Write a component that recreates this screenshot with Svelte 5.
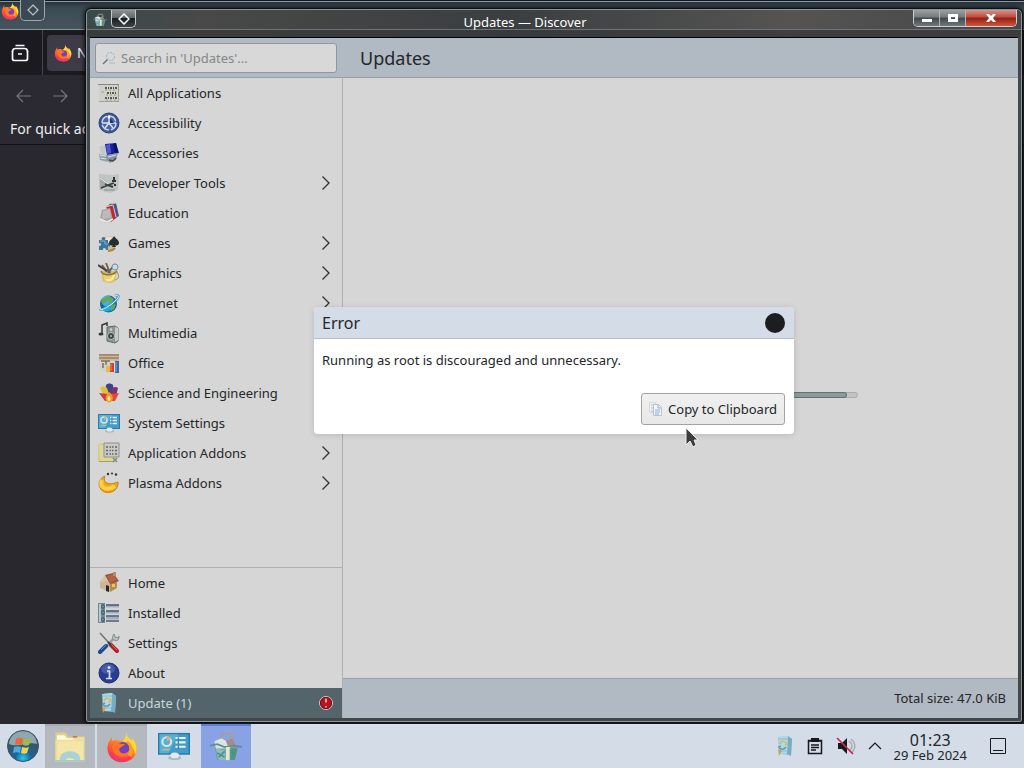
<script>
  const categories = [
    { icon: 'apps', label: 'All Applications' },
    { icon: 'access', label: 'Accessibility' },
    { icon: 'accessories', label: 'Accessories' },
    { icon: 'dev', label: 'Developer Tools', more: true },
    { icon: 'edu', label: 'Education' },
    { icon: 'games', label: 'Games', more: true },
    { icon: 'graphics', label: 'Graphics', more: true },
    { icon: 'internet', label: 'Internet', more: true },
    { icon: 'media', label: 'Multimedia' },
    { icon: 'office', label: 'Office' },
    { icon: 'science', label: 'Science and Engineering' },
    { icon: 'system', label: 'System Settings' },
    { icon: 'addons', label: 'Application Addons', more: true },
    { icon: 'plasma', label: 'Plasma Addons', more: true }
  ];
  const places = [
    { icon: 'home', label: 'Home' },
    { icon: 'installed', label: 'Installed' },
    { icon: 'tools', label: 'Settings' },
    { icon: 'about', label: 'About' },
    { icon: 'update', label: 'Update (1)', active: true }
  ];
  const tasks = [
    { icon: 'folder', label: 'Files', state: 'open' },
    { icon: 'firefox', label: 'Firefox', state: 'open' },
    { icon: 'system', label: 'System Settings', state: '' },
    { icon: 'bag', label: 'Discover', state: 'current' }
  ];
</script>

{#snippet icon(name)}
  <svg class="icon" viewBox="0 0 22 22" aria-hidden="true">
    {#if name === 'apps'}
      <path d="M1 3h20v16H1z" fill="#cfcfcc" /><path d="M0 2.500h21" stroke="#84888a" /><path d="M1 19.500h20" stroke="#a3a39a" /><path d="M20.500 3v16" stroke="#a89f7a" />
      <path d="M7 6h12M9 11h10M7 16h12" stroke="#55595a" stroke-width="2" stroke-dasharray="2 1 1 1" /><path d="M7 8h12M8 13h11M8 18h11" stroke="#a39a78" stroke-dasharray="2 2" /><path d="M3 10h3" stroke="#9fa3a3" />
    {:else if name === 'access'}
      <circle cx="11" cy="11" r="10" fill="#3c5594" stroke="#2b4278" /><circle cx="11" cy="11" r="7" fill="#4a63a2" stroke="#c9d5ea" stroke-width="1.500" stroke-dasharray="9 2" />
      <path d="M11 3v9M4 11h14M11 11l-4 5M11 11l4 5" stroke="#dbe5f2" stroke-width="1.400" fill="none" /><path d="M12 6v5h4z" fill="#20376e" /><circle cx="11" cy="5" r="1.500" fill="#fff" />
    {:else if name === 'accessories'}
      <path d="M1 5l7-2 1 7-5 3z" fill="#c3c7cb" /><path d="M7 2l11-1 3 10-12 2z" fill="#1a1f9c" /><path d="M8 3l4-1 1 9-4 1z" fill="#4a58d2" /><path d="M15 2l3-1 2 9-3 1z" fill="#0b1065" />
      <path d="M1 12l8 1 1 7-8-2z" fill="#95a1aa" /><path d="M9 13l11-2-2 7-6 3-4-4z" fill="#8a949b" /><path d="M2 13l6 1M10 15l8-2M3 16l5 1" stroke="#d8e1e5" /><path d="M11 18l4 1 3-3" stroke="#404b55" stroke-width="1.500" fill="none" />
    {:else if name === 'dev'}
      <path d="M1 2l14 1 6-1-1 16-8 3-11-3z" fill="#c0c3c1" /><path d="M2 5l7 5-7 8z" fill="#a3a8a7" /><path d="M3 16l10-4 3-1" stroke="#353e3e" stroke-width="1.500" fill="none" /><path d="M7 12l8 3" stroke="#394343" stroke-width="2" /><path d="M16 5v3M14 9h4M17 12v2" stroke="#2e3635" stroke-width="2" /><path d="M6 18h11" stroke="#8a918f" /><path d="M2 6l8 6" stroke="#ecefed" />
    {:else if name === 'edu'}
      <path d="M11 2l7-1 3 13-5 3z" fill="#46568d" /><path d="M13 2l5-1" stroke="#b3bad4" /><path d="M8 4l7-1 3 13-5 4z" fill="#bd2932" /><path d="M4 8l8-2 3 12-6 3-7-4z" fill="#a4a2a1" /><path d="M5 9l7-2 1 9-9 1z" fill="#bdbbb9" /><path d="M2 17l7 3 6-3" stroke="#eeeaea" fill="none" stroke-width="1.500" /><path d="M7 5l8-2 3 12" fill="none" stroke="#e4c5c8" />
    {:else if name === 'games'}
      <circle cx="11" cy="11" r="7" fill="#d1b991" /><circle cx="11" cy="9" r="4.500" fill="#f2dfc5" /><path d="M1 8h3c-2-4 5-4 3 0h3v3c3-1 3 5 0 3v4H8c0-3-4-2-3 0H1v-4c3 0 3-3 0-3z" fill="#39779b" /><path d="M2 9h5v3h3" stroke="#85b5cf" fill="none" />
      <path d="M16 4c2 3 5 4 5 7 0 3-4 3-5 1-1 2-5 2-5-1 0-3 4-4 5-7zM16 10l2 5h-4z" fill="#222d31" /><path d="M10 19c3 0 5-1 7-3" stroke="#b87f3d" stroke-width="2" fill="none" />
    {:else if name === 'graphics'}
      <path d="M3 9h16l-2 10c-4 3-9 2-12 0z" fill="#dfbb5b" /><path d="M5 10c2 3 9 3 13 0l-2 8c-2 2-7 3-10 0z" fill="#ecd070" /><path d="M8 18c4 1 7-1 8-5" stroke="#f8ebaa" fill="none" stroke-width="2" />
      <path d="M4 3l5 7M8 1l4 10" stroke="#81673f" stroke-width="2" /><path d="M0 3l9 6" stroke="#38414a" stroke-width="2" /><path d="M10 11l7-9M9 7l3 4" stroke="#5b6278" stroke-width="2" /><circle cx="17" cy="5" r="3" fill="#c4dcec" stroke="#7890ac" /><path d="M3 9c2 5 12 5 16 0" stroke="#877238" fill="none" stroke-width="1.500" /><path d="M18 8c4 6 3 9-1 10" stroke="#9e9051" fill="none" />
    {:else if name === 'internet'}
      <circle cx="10.500" cy="12" r="8.500" fill="#1864a4" /><circle cx="9" cy="9" r="5.500" fill="#55c2e7" opacity=".8" /><path d="M5 7l5-3 5 2 1 4-4 1-2-3-4 4-3-2zM12 13l6-1-2 5-3 2z" fill="#61a957" /><path d="M17 4c6-2 3 3-2 7-5 4-12 8-13 6" fill="none" stroke="#3f95c5" stroke-width="2.500" /><path d="M17 4c6-2 3 3-2 7-5 4-12 8-13 6" fill="none" stroke="#eef8fa" stroke-width="1" /><ellipse cx="9" cy="17" rx="4" ry="2.500" fill="#25dcf4" opacity=".6" />
    {:else if name === 'media'}
      <path d="M4 12V3l5-2v3" fill="none" stroke="#313637" stroke-width="1.500" /><ellipse cx="3" cy="12" rx="2.500" ry="1.500" fill="#303536" /><path d="M9 5l8-1 3 2v13l-3 2-8-2z" fill="#8d9191" stroke="#666c6b" /><path d="M17 5l3 1v12l-3 2z" fill="#c7cbca" /><circle cx="13" cy="14" r="3.500" fill="#353d3f" stroke="#c3caca" /><circle cx="13" cy="14" r="1.300" fill="#94a4a6" /><circle cx="13" cy="7.500" r="1.300" fill="#d2d6d5" />
    {:else if name === 'office'}
      <path d="M1 2h20v7H1z" fill="#cbb99b" /><path d="M1 3h20M1 6h20" stroke="#a07d62" stroke-width="1.500" /><path d="M2 8h11v11H2z" fill="#d5d1c7" /><path d="M3 9h9M5 11v5M8 9v4" stroke="#756f64" stroke-width="1.500" /><path d="M8 14h4v6H8z" fill="#e4ba42" /><path d="M12 11h4v9h-4z" fill="#cc4333" /><path d="M17 9h4v12h-4z" fill="#386d9c" /><path d="M13 12v7" stroke="#ef8473" /><path d="M18 10v10" stroke="#88aed0" />
    {:else if name === 'science'}
      <path d="M8 3c2-2 5-2 7 0l1 8H7z" fill="#394192" /><path d="M2 6c2-2 5-2 7 0l3 9-6-1z" fill="#e3bd36" /><path d="M20 6c-2-2-5-1-7 1l-2 9 7-2z" fill="#7d3171" /><path d="M1 11l9 1 2 7H7z" fill="#cf3c3d" /><path d="M21 11l-8 1-3 7h7z" fill="#d84d38" /><path d="M11 10c3 2 5 5 3 9-2 2-5 2-6-1-1-3 0-5 3-8z" fill="#f19a22" /><ellipse cx="11" cy="16.500" rx="1.500" ry="2.500" fill="#fce9b4" />
    {:else if name === 'system'}
      <path d="M0 2h22v15H0z" fill="#267cac" /><path d="M1 3h20v13H1z" fill="#449bc7" /><path d="M1 3h13L7 16H1z" fill="#68bad8" opacity=".6" /><circle cx="6" cy="8" r="3" fill="none" stroke="#cfe7ee" stroke-width="1.500" /><path d="M6 8V4l3 2z" fill="#e5a76e" /><path d="M12 5.500h7M12 8.500h7M12 11.500h7" stroke="#e4f3f6" stroke-width="1.500" /><path d="M14 5v8" stroke="#348bbd" /><path d="M3 13.500h5" stroke="#c9b494" stroke-width="1.200" /><ellipse cx="11.500" cy="19" rx="4.500" ry="1.700" fill="#adb7c0" /><ellipse cx="11.500" cy="17.500" rx="3" ry="2" fill="#e5e9ed" />
    {:else if name === 'addons'}
      <path d="M0 2l6-1v17l-6 2z" fill="#d3cf82" /><path d="M1 3h18v16H2z" fill="#dad79a" /><path d="M6 1h15v14H6z" fill="#c9cbc6" stroke="#8e9189" /><path d="M8 5h11M8 8.500h11M8 12h11" stroke="#5c6262" stroke-width="1.500" stroke-dasharray="2 1" /><path d="M11 3v11M16 3v11" stroke="#c9cbc6" /><path d="M1 19.500h15" stroke="#a3a064" /><path d="M15 16l4 4M15 20l4-4" stroke="#85897f" stroke-width="1.500" />
    {:else if name === 'plasma'}
      <path d="M7 4C4 11 11 14 20 10c1 6-5 12-12 10C-1 18-1 7 7 4z" fill="#e8a725" stroke="#c98018" /><path d="M4 8c-3 9 6 11 13 6" fill="none" stroke="#ffd03f" stroke-width="4" /><circle cx="10" cy="2" r="1.200" fill="#30332c" /><circle cx="14" cy="1.500" r="1" fill="#30332c" /><circle cx="18" cy="2.500" r="1.200" fill="#30332c" /><path d="M3 17c3 4 8 4 11 2" fill="none" stroke="#e58c1c" stroke-width="1.500" />
    {:else if name === 'home'}
      <path d="M2 10l7-2 3 4v8L2 16z" fill="#cbb69c" /><path d="M12 11l7-2v7l-7 4z" fill="#b58a4b" /><path d="M1 10L7 3l5 8-3-2z" fill="#d8c4a3" /><path d="M7 3l8-2 6 8-9 3z" fill="#9a4e31" /><path d="M9 4l6-2 4 6-7 3z" fill="#b66048" /><path d="M8 13l3 1v6l-3-1z" fill="#292927" /><path d="M14 12h3v3h-3z" fill="#e6c46a" /><path d="M15 0h3v4h-3z" fill="#a69177" />
    {:else if name === 'installed'}
      <path d="M0 1h7v20H0z" fill="#6d8b93" /><path d="M2 2v18" stroke="#d3dcdb" stroke-width="1.500" /><path d="M4 3h2v3H4zM4 9h2v3H4zM4 16h2v3H4z" fill="#c2d8df" stroke="#2d4b60" /><path d="M8 4h13M8 10h13M8 16h13" stroke="#a4b0b9" stroke-width="3" /><path d="M8 3h13M8 9h13M8 14h13M8 19h13" stroke="#455e75" stroke-width="1.500" />
    {:else if name === 'tools'}
      <path d="M2 1l9 10" stroke="#6a7376" stroke-width="1.500" /><path d="M9 14l8-9" stroke="#949b9c" stroke-width="2.500" /><path d="M16 2l1 3 3 1 1-2c0 5-2 5-5 4-2-1-2-4 0-6z" fill="#bbc0c0" stroke="#858d90" /><path d="M13 13l6 6" stroke="#b31e27" stroke-width="4" stroke-linecap="round" /><path d="M13 12l6 6" stroke="#e6605f" /><path d="M8 14l-6 6" stroke="#174a91" stroke-width="4" stroke-linecap="round" /><path d="M8 13l-5 5" stroke="#5197d5" /><path d="M10 10l3 3" stroke="#383c3f" stroke-width="2" />
    {:else if name === 'about'}
      <circle cx="11" cy="11" r="10" fill="#283d92" stroke="#203270" /><ellipse cx="10" cy="7" rx="7" ry="5" fill="#6078bc" opacity=".55" /><circle cx="11" cy="5.500" r="1.500" fill="#dde3f5" /><path d="M9 9h2.500v7M8 16.500h6" fill="none" stroke="#dbe2f6" stroke-width="1.700" />
    {:else if name === 'update'}
      <path d="M4 2l10-1 4 3-1 16-12-1z" fill="#98cadf" /><path d="M14 1l4 3-1 17-4-2z" fill="#74adc6" /><path d="M5 2l9-1-1 17-8 1z" fill="#b4d8df" /><path d="M5 4h9M5 16h8" stroke="#8cbacc" /><path d="M6 9c1-4 6-3 7 0l-2 1" fill="none" stroke="#d5b768" stroke-width="1.500" /><path d="M12 12c-2 3-6 3-7 0l2-1" fill="none" stroke="#6099b5" stroke-width="1.500" /><path d="M4 14l4 2-3 5z" fill="#c3a562" />
    {:else if name === 'folder'}
      <path d="M1 1h7l2 3h10v17H1z" fill="#e4ce80" /><path d="M2 3h5l2 2h9v3H2z" fill="#fffbe0" /><path d="M1 6h12l2-2h6v17H1z" fill="#f0dd97" /><path d="M2 7h18v13H2z" fill="#f4e5a8" /><path d="M13 4h3" stroke="#cb6651" /><path d="M4 20c-1-8 15-8 14 0h-4c0-2-6-2-6 0z" fill="#a2cddd" opacity=".9" /><path d="M1 20.500h20" stroke="#9dc7ca" />
    {:else if name === 'firefox'}
      <path d="M14 1c0 3 2 4 4 6V5c3 4 4 6 3 9-1 5-5 7.500-10 7.500C5 21.500 1 17 1 12c0-4 2-6 3-8v3c2-1 4-1 6 0 3-1 4-3 4-6z" fill="url(#fox)" /><path d="M14 1c0 3 2 4 4 6V5c3 4 4 8 2 11-1-5-3-8-9-9 2-1 3-3 3-6z" fill="#ffd83a" /><path d="M14 8c3 2 4 6 2 9" stroke="#ff9c24" stroke-width="3" fill="none" /><circle cx="11.500" cy="12" r="4.500" fill="#7542bd" /><path d="M6 8c3 0 4 1 7 1-1 2-4 2-4 4 1 3 4 3 7 1-1 5-9 5-11 0-1-3-1-4 1-6z" fill="#ff7427" /><path d="M3 15c3 5 9 7 14 3" stroke="#f43960" stroke-width="2" fill="none" />
    {:else if name === 'bag'}
      <path d="M3 11h16l-2 9H5z" fill="#6fa1a6" /><path d="M4 12l6 1 1 7H6z" fill="#8dbdbc" /><path d="M14 12h5l-2 8h-3z" fill="#539485" /><path d="M3 7l5-2 5 3 1 4H4z" fill="#dce5e2" /><path d="M7 5l2-3h6l1 4" fill="none" stroke="#b39a8a" stroke-width="1.300" /><path d="M11 7l4-2 3 5h-6z" fill="#a98b80" /><path d="M0 10l5-1 5 2 6-1 6 1" fill="none" stroke="#5f8f93" stroke-width="1.200" /><path d="M11 11h2.500v9H11z" fill="#dfebc9" /><path d="M5 15l5 3M6 18l4-4M15 14l2 3" stroke="#4e8b90" />
    {/if}
  </svg>
{/snippet}

<svg class="defs" aria-hidden="true"><defs>
  <linearGradient id="fox" x1=".8" y1="0" x2=".2" y2="1"><stop offset="0" stop-color="#ffe638" /><stop offset=".4" stop-color="#ff8b1d" /><stop offset=".75" stop-color="#ff4a40" /><stop offset="1" stop-color="#e0288a" /></linearGradient>
  <radialGradient id="orb" cx=".5" cy=".9"><stop offset="0" stop-color="#29cae9" /><stop offset=".5" stop-color="#17679b" /><stop offset="1" stop-color="#36586c" /></radialGradient>
</defs></svg>

<div class="screen">
  <main class="desktop">
    <section class="browser" aria-label="Mozilla Firefox">
      <div class="browser-title">
        <span class="fox">{@render icon('firefox')}</span>
        <button class="pin dim" aria-label="Keep above"><svg viewBox="0 0 12 12"><path d="M6 1l5 5-5 5-5-5z" /></svg></button>
      </div>
      <div class="tabs">
        <button class="view" aria-label="Firefox View"><svg viewBox="0 0 18 18"><path d="M4.500 1.500h9M1.500 7.500c0-2 1-3 3-3h9c2 0 3 1 3 3" /><path d="M1.500 7v7.500q0 2 2 2h11q2 0 2-2V7M7 10h4" /></svg></button>
        <button class="tab"><span class="fox">{@render icon('firefox')}</span>New Tab</button>
      </div>
      <div class="nav">
        <button aria-label="Back"><svg viewBox="0 0 16 16"><path d="M15 8H1M7 2L1 8l6 6" /></svg></button>
        <button aria-label="Forward"><svg viewBox="0 0 16 16"><path d="M1 8h14M9 2l6 6-6 6" /></svg></button>
      </div>
      <p class="bookmarks">For quick access</p>
    </section>

    <section class="window" aria-label="Discover">
      <div class="titlebar">
        <span class="bag">{@render icon('bag')}</span>
        <button class="pin" aria-label="Keep above"><svg viewBox="0 0 12 12"><path d="M6 1l5 5-5 5-5-5z" /></svg></button>
        <span class="title">Updates — Discover</span>
        <div class="controls">
          <button aria-label="Minimize"><svg viewBox="0 0 12 12"><path d="M1 7h10v3H1z" /></svg></button>
          <button aria-label="Maximize"><svg viewBox="0 0 12 12"><path fill-rule="evenodd" d="M1 2h10v8H1zM4 5v2h4V5z" /></svg></button>
          <button class="close" aria-label="Close"><svg viewBox="0 0 12 12"><path d="M1 2h3l2 2 2-2h3L8 6l3 4H8L6 8l-2 2H1l3-4z" /></svg></button>
        </div>
      </div>
      <div class="content">
        <header>
          <label class="search">
            <svg viewBox="0 0 14 14" aria-hidden="true"><circle cx="8.500" cy="5.500" r="4" fill="#d4d8db" stroke="#a3a8ab" stroke-dasharray="2 1" /><path d="M5.500 8.500L1 13" stroke="#6d7173" stroke-width="1.500" /><path d="M7 12h6" stroke="#b0b3b5" /></svg>
            <input type="text" placeholder="Search in 'Updates'..." aria-label="Search in Updates" />
          </label>
          <h1>Updates</h1>
        </header>
        <div class="body">
          <nav class="side">
            <div class="group">
              {#each categories as item}
                <button class="row">{@render icon(item.icon)}<span>{item.label}</span>
                  {#if item.more}<svg class="more" viewBox="0 0 10 16" aria-hidden="true"><path d="M1.500 1.500L8 8l-6.500 6.500" /></svg>{/if}
                </button>
              {/each}
            </div>
            <div class="group places">
              {#each places as item}
                <button class="row" class:active={item.active}>{@render icon(item.icon)}<span>{item.label}</span>
                  {#if item.active}<svg class="alert" viewBox="0 0 16 16" aria-hidden="true"><circle cx="8" cy="8" r="6.500" fill="#b81521" stroke="#e3c5c7" /><circle cx="8" cy="8" r="5.500" fill="none" stroke="#681018" /><path d="M8 3.500v4M8 11v1.500" stroke="#f6dfe0" stroke-width="1.300" /></svg>{/if}
                </button>
              {/each}
            </div>
          </nav>
          <div class="page">
            <div class="updates"><div class="bar"><span></span></div></div>
            <footer>Total size: 47.0 KiB</footer>
          </div>
        </div>
        <div class="overlay">
          <div class="dialog" role="dialog" aria-labelledby="error-title">
            <div class="dialog-head"><h2 id="error-title">Error</h2><button aria-label="Close message"></button></div>
            <div class="dialog-body">
              <p>Running as root is discouraged and unnecessary.</p>
              <button class="copy"><svg viewBox="0 0 16 16" aria-hidden="true"><path d="M1.500 1.500h6v10h-6z" fill="#f0f3f5" stroke="#d2d8dc" /><path d="M3 4h3M3 7h2M3 10h2" stroke="#a9bbce" /><path d="M5.500 3.500h5l3 3v8h-8z" fill="#f4f8fc" stroke="#b3c2d1" /><path d="M10 4v3h3M7 9h5M7 11h5M7 13h4" fill="none" stroke="#8faac6" /></svg>Copy to Clipboard</button>
            </div>
          </div>
        </div>
      </div>
    </section>
    <svg class="cursor" viewBox="0 0 13 21" aria-hidden="true"><path d="M1 1v17l4-4 3 6 3-2-2-5h4z" fill="#3b3c3e" stroke="#eee" /></svg>
  </main>

  <div class="taskbar">
    <button class="start" aria-label="Start">
      <svg viewBox="0 0 34 34"><circle cx="17" cy="17" r="15.500" fill="url(#orb)" stroke="#375469" /><path d="M3 15C4-2 30-2 31 15 22 12 12 19 3 15z" fill="#cbdcdf" opacity=".6" /><path d="M10 10c3-2 5-1 7 0l-1 6c-2-1-4-1-7 0z" fill="#ee6831" /><path d="M18 10c3 1 5 1 7-1l-2 7c-2 1-4 1-6 0z" fill="#9abd42" /><path d="M8 18c3-1 5-1 7 0l-1 6c-2-1-4-1-7 0z" fill="#4caadd" /><path d="M16 18c3 1 5 1 7 0l-2 6c-2 1-4 1-6 0z" fill="#f6cf50" /></svg>
    </button>
    <div class="tasks">
      {#each tasks as task}
        <button class="task {task.state}" aria-label={task.label}>{@render icon(task.icon)}</button>
      {/each}
    </div>
    <div class="tray">
      {@render icon('update')}
      <svg viewBox="0 0 22 22" aria-hidden="true"><path d="M4.500 5.500h13v13h-13z" fill="none" stroke="#17191c" stroke-width="1.500" /><path d="M7 3h8v4H7z" fill="#17191c" /><path d="M4 6h14M7 10h8M7 12.500h8M7 15h5" stroke="#17191c" stroke-width="1.500" /></svg>
      <svg viewBox="0 0 22 22" aria-hidden="true"><path d="M4 8h4l5-5v16l-5-5H4z" fill="#17191c" /><path d="M15 6c4 3 4 7 0 10M17 4c5 4 5 10 0 14" fill="none" stroke="#a7abb1" stroke-width="1.500" /><path d="M3 3l16 16" stroke="#c62b50" stroke-width="1.700" /></svg>
      <svg viewBox="0 0 22 22" aria-hidden="true"><path d="M5 14l6-6 6 6" fill="none" stroke="#17191c" stroke-width="1.200" /></svg>
      <div class="clock"><time>01:23</time><span>29 Feb 2024</span></div>
      <button class="show" aria-label="Show desktop"><svg viewBox="0 0 18 18"><path d="M1.500 1.500h15v15h-15zM4 13.500h10" fill="none" stroke="#17191c" /></svg></button>
    </div>
  </div>
</div>

<style>
  :global(body) { margin: 0; }
  .screen { height: 100vh; display: flex; flex-direction: column; overflow: hidden; font: 13px/20px "Noto Sans", sans-serif; color: #232629; }
  button { font: inherit; color: inherit; border: 0; padding: 0; background: none; }
  button, header, .row, .tray { display: flex; align-items: center; }
  h1, h2, p { margin: 0; font-weight: 400; }
  svg { display: block; flex: none; }
  .defs { position: absolute; width: 0; height: 0; }
  .icon { width: 22px; height: 22px; }
  .desktop { flex: 1; min-height: 0; position: relative; background: #2a2930; }

  .browser { position: absolute; inset: 0; background: #29282f; color: #eeeef1; }
  .browser-title { display: flex; align-items: flex-start; height: 30px; box-sizing: border-box; border-bottom: 1px solid #8a979f; background: linear-gradient(#10161f 1px, #8d98a2 1px, #8d98a2 2px, #28323b 2px, #3c4a54 8px, #46545d); }
  .browser-title .fox { padding: 2px 1px 0; }
  .fox .icon { width: 18px; height: 18px; }
  .tabs { display: flex; height: 45px; background: #1b1a20; align-items: center; }
  .view { width: 43px; height: 45px; justify-content: center; padding-right: 3px; box-sizing: border-box; border-right: 1px solid #45454d; }
  .view svg, .nav svg { width: 18px; height: 18px; fill: none; stroke: #fbfbfe; stroke-width: 1.7; }
  .tab { margin-left: 4px; padding-left: 7px; gap: 5px; width: 200px; height: 36px; border-radius: 4px; background: #3d3c46; font-size: 14px; }
  .nav { display: flex; height: 42px; padding-left: 16px; gap: 20px; align-items: center; background: #2b2a33; }
  .nav svg { width: 16px; height: 16px; stroke: #77767f; stroke-width: 1.2; }
  .bookmarks { height: 27px; padding-left: 10px; border-bottom: 1px solid #111116; background: #2b2a33; font-size: 14px; line-height: 24px; }

  .window { position: absolute; inset: 8px 1px 1px 85px; box-sizing: border-box; padding: 0 4px 4px; display: flex; flex-direction: column; border: 1px solid #0c0e10; border-radius: 6px 6px 3px 3px; background: #41484b; box-shadow: inset 0 0 0 1px #8d969a, 0 0 5px #000; }
  .titlebar { display: grid; grid-template-columns: auto auto 1fr auto; align-items: start; height: 27px; margin: 1px -3px 0; border-radius: 5px 5px 0 0; background: linear-gradient(100deg, #39494b, #484948 12%, #3b3e40 45%, #555453 75%, #454647); position: relative; }
  .titlebar::after { content: ""; position: absolute; left: 0; right: 0; top: 19px; height: 7px; border-top: 1px solid #6f7374; background: #373a3ccc; }
  .bag { padding: 3px 4px 0 6px; }
  .bag .icon { width: 14px; height: 14px; }
  .pin { width: 25px; height: 18px; box-sizing: border-box; justify-content: center; border: 1px solid #c3c8ca; border-top: 0; border-radius: 0 0 5px 5px; background: linear-gradient(#8d9293, #626769 45%, #181e21 50%, #3c4548); z-index: 1; }
  .pin.dim { height: 21px; background: #3a4852; border-color: #9ca7ae; }
  .pin svg { width: 12px; height: 12px; fill: none; stroke: #fff; stroke-width: 1.5; }
  .pin.dim svg { stroke: #b9c4ca; stroke-width: 1.2; }
  .title { position: absolute; left: 0; right: 58px; top: 2px; text-align: center; color: #fff; z-index: 1; pointer-events: none; }
  .controls { grid-column: 4; display: flex; z-index: 1; height: 16px; margin-right: 4px; border: 1px solid #cacecf; border-top: 0; border-radius: 0 0 5px 5px; overflow: hidden; }
  .controls button { width: 26px; justify-content: center; border-right: 1px solid #b3b6b7; background: linear-gradient(#9ca0a1, #74797a 45%, #42484a 50%, #71787a); }
  .controls .close { width: 50px; border-right: 0; background: linear-gradient(#d3968c, #bd4a3b 45%, #8e2015 50%, #d2553b); }
  .controls svg { width: 12px; height: 12px; fill: #fff; }
  .content { position: relative; flex: 1; min-height: 0; display: flex; flex-direction: column; border-top: 1px solid #000; background: #d6d6d6; }
  header { height: 39px; flex: none; border-bottom: 1px solid #979fa7; background: #b1b9c3; }
  .search { display: flex; align-items: center; gap: 5px; width: 242px; height: 30px; box-sizing: border-box; margin-left: 5px; padding: 0 6px; border: 1px solid #92979b; border-radius: 3px; background: #d8d8d8; }
  .search svg { width: 14px; height: 14px; }
  .search input { min-width: 0; flex: 1; padding: 0; border: 0; outline: 0; background: none; font: inherit; color: #232629; }
  .search input::placeholder { color: #838689; opacity: 1; }
  h1 { margin-left: 23px; font-size: 18px; line-height: 24px; }
  .body { flex: 1; min-height: 0; display: flex; }
  .side { width: 252px; border-right: 1px solid #aeb0b1; display: flex; flex-direction: column; justify-content: space-between; }
  .places { border-top: 1px solid #aeb0b1; }
  .row { width: 100%; height: 30px; gap: 8px; padding: 0 8px; text-align: left; }
  .row span { flex: 1; }
  .more { width: 10px; height: 16px; margin-right: 3px; fill: none; stroke: #303335; stroke-width: 1.3; }
  .alert { width: 16px; height: 16px; }
  .active { background: #53656b; color: #cbd5d8; }
  .page { flex: 1; display: flex; flex-direction: column; }
  .updates { flex: 1; display: flex; align-items: center; justify-content: center; padding-top: 34px; }
  .bar { width: 355px; height: 6px; box-sizing: border-box; border: 1px solid #a9adad; border-radius: 3px; background: #c2c4c4; }
  .bar span { display: block; width: 97%; height: 4px; border-radius: 2px; background: #8c9998; box-shadow: 0 0 0 1px #657274; }
  footer { height: 39px; line-height: 39px; padding-right: 12px; border-top: 1px solid #979fa7; background: #b1b9c3; text-align: right; }
  .overlay { position: absolute; inset: 0 0 15px; display: flex; align-items: center; justify-content: center; }
  .dialog { width: 480px; border-radius: 4px; background: #fff; box-shadow: 0 1px 6px #00000022; overflow: hidden; }
  .dialog-head { display: flex; align-items: center; justify-content: space-between; height: 31px; padding: 0 9px 0 8px; border-bottom: 1px solid #b6bec7; background: #d3dce7; }
  h2 { font-size: 16px; line-height: 24px; }
  .dialog-head button { width: 20px; height: 20px; border-radius: 50%; background: #1b1d1f; }
  .dialog-body { display: flex; flex-direction: column; gap: 23px; padding: 11px 9px 9px 8px; }
  .copy { align-self: flex-end; height: 32px; gap: 4px; padding: 0 7px 0 6px; border: 1px solid #a1a3a5; border-radius: 3px; background: linear-gradient(#f0f0f0, #e8e8e8); }
  .copy svg { width: 16px; height: 16px; }
  .cursor { position: absolute; left: 685px; top: 427px; width: 13px; height: 21px; }

  .taskbar { height: 44px; flex: none; display: flex; background: #d4dce8; position: relative; }
  .start { width: 45px; justify-content: center; }
  .start svg { width: 34px; height: 34px; }
  .tasks { display: flex; gap: 2px; flex: 1; }
  .task { width: 50px; justify-content: center; }
  .task .icon { width: 32px; height: 32px; }
  .open { background: #b4b9c0; border-top: 2px solid #a7acb3; }
  .current { background: #88a2e5; border-top: 2px solid #5d7fd4; }
  .tray { gap: 8px; padding-right: 17px; }
  .clock { display: flex; flex-direction: column; align-items: center; line-height: 14px; padding-top: 1px; }
  .clock time { font-size: 16px; line-height: 16px; }
  .tray > svg { width: 22px; height: 22px; }
  .show { margin-left: 14px; }
  .show svg { width: 18px; height: 18px; }
</style>
